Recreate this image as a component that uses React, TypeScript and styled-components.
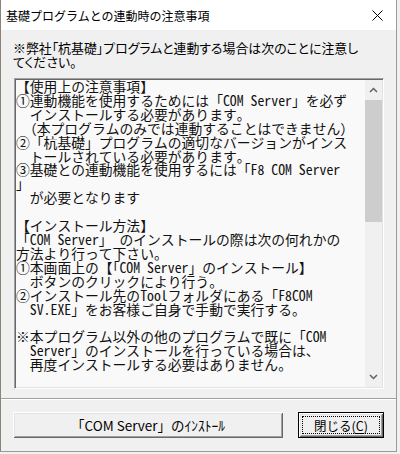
import React from "react";
import styled, { createGlobalStyle } from "styled-components";

const GlobalStyle = createGlobalStyle`
  html, body { margin: 0; padding: 0; background: #f0f0f0; }
  body { width: 400px; height: 454px; overflow: hidden; }
  * { box-sizing: border-box; }
`;

const UI = `"Noto Sans CJK JP", "Noto Sans", sans-serif`;
const MONO = `"Noto Sans Mono CJK JP", "Noto Sans CJK JP", "Liberation Mono", monospace`;

const Window = styled.div`
  width: 397px;
  height: 452px;
  display: flex;
  flex-direction: column;
  background: #f0f0f0;
  border-left: 1px solid #8d8478;
  border-right: 1px solid #9a9a9a;
  border-bottom: 1px solid #9a9a9a;
`;

const TitleBar = styled.div`
  height: 30px;
  flex: none;
  display: flex;
  align-items: center;
  justify-content: space-between;
  background: #ffffff;
  padding-left: 5px;
`;

const Title = styled.span`
  font-family: ${UI};
  font-size: 12px;
  color: #000;
`;

const CloseBox = styled.div`
  width: 38px;
  height: 30px;
  display: flex;
  align-items: center;
  justify-content: center;
`;

const Body = styled.div`
  flex: 1;
  display: flex;
  flex-direction: column;
  padding: 11px 12px 0 13px;
`;

const Note = styled.div`
  font-family: ${UI};
  font-size: 12.9px;
  font-feature-settings: "palt";
  line-height: 14px;
  white-space: pre;
  color: #000;
  margin-left: -1px;
`;

const TextBox = styled.div`
  margin-top: 9px;
  height: 311px;
  display: flex;
  border-top: 1px solid #a0a0a0;
  border-left: 1px solid #a0a0a0;
  border-right: 1px solid #ffffff;
  border-bottom: 1px solid #ffffff;
  box-shadow: inset 1px 1px 0 #696969, inset -1px -1px 0 #e3e3e3;
  padding: 1px;
  background: #f9f9f9;
`;

const TextArea = styled.div`
  flex: 1;
  min-width: 0;
  font-family: ${MONO};
  font-size: 13.8px;
  line-height: 13.9px;
  white-space: pre;
  color: #111;
`;

const ScrollBar = styled.div`
  width: 17px;
  flex: none;
  display: flex;
  flex-direction: column;
  background: #f0f0f0;
`;

const ArrowButton = styled.div`
  height: 20px;
  flex: none;
  display: flex;
  align-items: center;
  justify-content: center;
`;

const Track = styled.div`
  flex: 1;
  display: flex;
  flex-direction: column;
`;

const Thumb = styled.div`
  background: #cdcdcd;
  flex: none;
`;

const Footer = styled.div`
  flex: none;
  display: flex;
  gap: 15px;
  padding: 13px 12px 13px 12px;
  border-top: 1px solid #a0a0a0;
  box-shadow: inset 0 1px 0 #ffffff;
`;

const Button = styled.button<{ $default?: boolean; $wide?: boolean }>`
  position: relative;
  height: 26px;
  width: ${(p) => (p.$wide ? "270px" : "86px")};
  padding: 0;
  margin: 0;
  font-family: ${UI};
  font-size: ${(p) => (p.$wide ? "13.5px" : "12.5px")};
  color: #000;
  background: #f0f0f0;
  border: ${(p) => (p.$default ? "1px solid #000" : "none")};
  box-shadow: inset 1px 1px 0 #ffffff, inset -1px -1px 0 #696969,
    inset 2px 2px 0 #e3e3e3, inset -2px -2px 0 #a0a0a0;
  &::after {
    content: "";
    display: ${(p) => (p.$default ? "block" : "none")};
    position: absolute;
    inset: 3px;
    border: 1px dotted #000;
  }
  u { text-decoration: underline; text-underline-offset: 2px; }
`;

const Chevron = ({ up }: { up?: boolean }) => (
  <svg width="9" height="6" viewBox="0 0 9 6">
    <polyline
      points={up ? "1,5 4.5,1.5 8,5" : "1,1 4.5,4.5 8,1"}
      fill="none"
      stroke="#606060"
      strokeWidth="1.5"
    />
  </svg>
);

const lines = [
  "【使用上の注意事項】",
  "①連動機能を使用するためには「COM Server」を必ず",
  "　インストールする必要があります。",
  "　（本プログラムのみでは連動することはできません）",
  "②「杭基礎」プログラムの適切なバージョンがインス",
  "　トールされている必要があります。",
  "③基礎との連動機能を使用するには「F8 COM Server",
  "」",
  "　が必要となります",
  "",
  "【インストール方法】",
  "「COM Server」 のインストールの際は次の何れかの",
  "方法より行って下さい。",
  "①本画面上の【「COM Server」のインストール】",
  "　ボタンのクリックにより行う。",
  "②インストール先のToolフォルダにある「F8COM",
  "　SV.EXE」をお客様ご自身で手動で実行する。",
  "",
  "※本プログラム以外の他のプログラムで既に「COM",
  "　Server」のインストールを行っている場合は、",
  "　再度インストールする必要はありません。",
];

export default function App() {
  return (
    <>
      <GlobalStyle />
      <Window>
        <TitleBar>
          <Title>基礎プログラムとの連動時の注意事項</Title>
          <CloseBox>
            <svg width="11" height="11" viewBox="0 0 11 11">
              <path d="M0.5 0.5 L10.5 10.5 M10.5 0.5 L0.5 10.5" stroke="#000" strokeWidth="1" />
            </svg>
          </CloseBox>
        </TitleBar>
        <Body>
          <Note>{"※弊社「杭基礎」プログラムと連動する場合は次のことに注意し\nてください。"}</Note>
          <TextBox>
            <TextArea>{lines.join("\n")}</TextArea>
            <ScrollBar>
              <ArrowButton>
                <Chevron up />
              </ArrowButton>
              <Track>
                <Thumb style={{ height: 122 }} />
              </Track>
              <ArrowButton>
                <Chevron />
              </ArrowButton>
            </ScrollBar>
          </TextBox>
        </Body>
        <Footer>
          <Button $wide>「COM Server」のｲﾝｽﾄｰﾙ</Button>
          <Button $default>
            閉じる(<u>C</u>)
          </Button>
        </Footer>
      </Window>
    </>
  );
}
